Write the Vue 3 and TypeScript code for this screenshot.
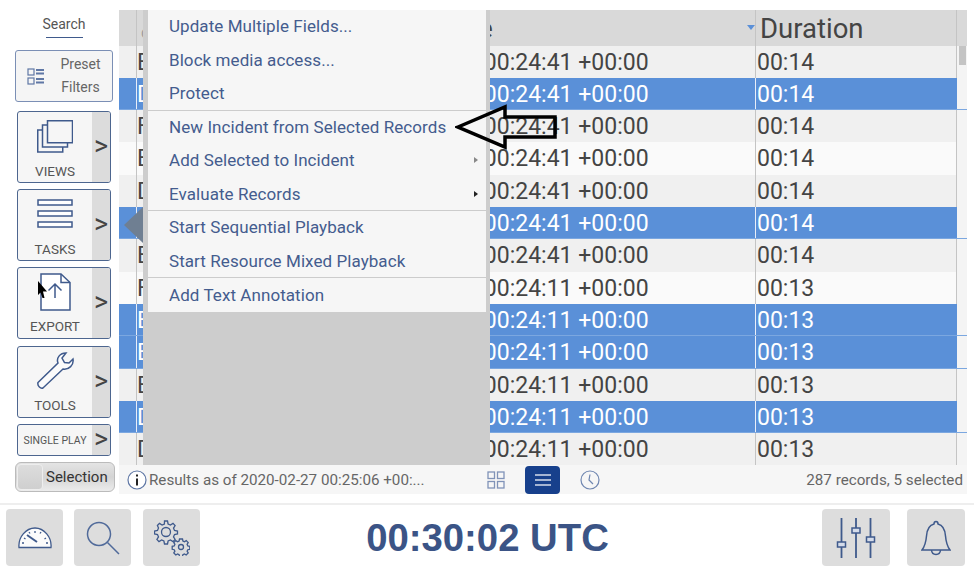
<script setup lang="ts">
interface Row { code: string; time: string; dur: string; sel: boolean }
const seed: [string, string, string, boolean][] = [
  ['E', '00:24:41', '00:14', false], ['D', '00:24:41', '00:14', true], ['F', '00:24:41', '00:14', false],
  ['E', '00:24:41', '00:14', false], ['D', '00:24:41', '00:14', false], ['D', '00:24:41', '00:14', true],
  ['E', '00:24:41', '00:14', false], ['F', '00:24:11', '00:13', false], ['E', '00:24:11', '00:13', true],
  ['E', '00:24:11', '00:13', true], ['E', '00:24:11', '00:13', false], ['D', '00:24:11', '00:13', true],
  ['D', '00:24:11', '00:13', false],
]
const rows: Row[] = seed.map(([code, time, dur, sel]) => ({ code, time: `2020-02-27 ${time} +00:00`, dur, sel }))
const menu = [
  { t: 'Update Multiple Fields...' }, { t: 'Block media access...' }, { t: 'Protect', sep: true },
  { t: 'New Incident from Selected Records' }, { t: 'Add Selected to Incident', sub: 'dim' },
  { t: 'Evaluate Records', sub: 'dark', sep: true }, { t: 'Start Sequential Playback' },
  { t: 'Start Resource Mixed Playback', sep: true }, { t: 'Add Text Annotation' },
]
</script>

<template>
  <div class="page">
    <div class="top">
      <aside class="side">
        <div class="search"><span>Search</span></div>
        <button class="preset">
          <svg width="18" height="17" viewBox="0 0 18 17" fill="none" stroke="#5f77a5" stroke-width="1.2">
            <rect x="1" y="1" width="6" height="6" /><rect x="1" y="10" width="6" height="6" />
            <path d="M9 2h8M9 5.500h8M9 11h8M9 14.500h8" stroke-width="2" />
          </svg>
          <span class="preset-t">Preset<br />Filters</span>
        </button>
        <div class="tool">
          <div class="tool-main">
            <svg class="ic-views" width="36" height="33" viewBox="0 0 36 33" fill="#f6f6f6" stroke="#3f5a8c" stroke-width="1.500">
              <rect x="0.750" y="10" width="25" height="22" /><rect x="5.500" y="5" width="25" height="22" /><rect x="10.500" y="0.750" width="25" height="22" />
            </svg>
            <span>VIEWS</span>
          </div>
          <div class="tool-arr">&gt;</div>
        </div>
        <div class="tool">
          <div class="tool-main">
            <svg class="ic-tasks" width="36" height="29" viewBox="0 0 36 29" fill="#fff" stroke="#3f5a8c" stroke-width="1.500">
              <rect x="1" y="1" width="34" height="5" /><rect x="1" y="12" width="34" height="5" /><rect x="1" y="23" width="34" height="5" />
            </svg>
            <span>TASKS</span>
          </div>
          <div class="tool-arr">&gt;</div>
        </div>
        <div class="tool low">
          <div class="tool-main">
            <svg class="ic-export" width="31" height="38" viewBox="0 0 31 38" fill="#fff" stroke="#3f5a8c" stroke-width="1.500">
              <path d="M1 1H21L30 9.500V37H1Z" /><path d="M21 1V9.500H30" fill="none" />
              <path d="M15 25V11M8.500 17.500L15 11L21.500 17.500" fill="none" />
            </svg>
            <span>EXPORT</span>
          </div>
          <div class="tool-arr">&gt;</div>
        </div>
        <div class="tool tools low">
          <div class="tool-main">
            <svg class="ic-tools" width="37" height="37" viewBox="0 0 37 37" fill="#fbfbfb" stroke="#3f5a8c" stroke-width="1.500">
              <path d="M1 30.500L21 11C19 6 23 1 29 1L25 6L27.500 10.500L32 11L36 7C37 13 32 18 26 17L6 36C4 37 0 34 1 30.500Z" />
            </svg>
            <span>TOOLS</span>
          </div>
          <div class="tool-arr">&gt;</div>
        </div>
        <div class="tool single">
          <div class="tool-main"><span>SINGLE PLAY</span></div>
          <div class="tool-arr">&gt;</div>
        </div>
        <div class="toggle"><i></i><span>Selection</span></div>
      </aside>

      <main class="main">
        <div class="table">
          <div class="head">
            <div class="c1"></div>
            <div class="c2"><span class="code">C</span></div>
            <div class="c3"><span>Time</span><i class="sort"></i></div>
            <div class="c4">Duration</div>
            <div class="c5"></div>
          </div>
          <div class="rows">
            <div v-for="(r, i) in rows" :key="i" class="row" :class="{ sel: r.sel, odd: i % 2 === 1 }">
              <div class="c1"></div>
              <div class="c2">{{ r.code }}</div>
              <div class="c3">{{ r.time }}</div>
              <div class="c4">{{ r.dur }}</div>
              <div class="c5"></div>
            </div>
            <div class="scroll"></div>
          </div>

          <div class="menu">
            <ul>
              <li v-for="m in menu" :key="m.t" :class="{ sep: m.sep }">
                {{ m.t }}
                <i v-if="m.sub" class="caret" :class="m.sub"></i>
              </li>
            </ul>
          </div>
          <svg class="tip" width="20" height="36" viewBox="0 0 20 36"><path d="M0 18L19 0V36Z" fill="#6f7f92" /></svg>
          <svg class="arrow" width="106" height="46" viewBox="0 0 106 46" fill="none" stroke="#000" stroke-width="3.500">
            <path d="M3 23L50 3V13H100V33H50V43Z" />
          </svg>
        </div>
        <footer class="status">
          <svg class="info" width="20" height="20" viewBox="0 0 20 20">
            <circle cx="10" cy="10" r="9" fill="#fff" stroke="#5f77a5" stroke-width="1.200" />
            <path d="M10 4.500v2M10 8.500v7" stroke="#222" stroke-width="2" />
          </svg>
          <span class="res">Results as of 2020-02-27 00:25:06 +00:...</span>
          <svg class="grid-i" width="18" height="18" viewBox="0 0 18 18" fill="none" stroke="#8093b8" stroke-width="1.300">
            <rect x="1" y="1" width="6.500" height="6.500" /><rect x="10.500" y="1" width="6.500" height="6.500" />
            <rect x="1" y="10.500" width="6.500" height="6.500" /><rect x="10.500" y="10.500" width="6.500" height="6.500" />
          </svg>
          <div class="listbtn">
            <svg width="16" height="12" viewBox="0 0 16 12" stroke="#d5dcea" stroke-width="1.600"><path d="M0 1h16M0 6h16M0 11h16" /></svg>
          </div>
          <svg class="clock-i" width="20" height="20" viewBox="0 0 20 20" fill="none" stroke="#6f86b0" stroke-width="1.200">
            <circle cx="10" cy="10" r="9" /><path d="M10 4.500L9 10L13 14" />
          </svg>
          <span class="count">287 records, 5 selected</span>
        </footer>
      </main>
    </div>

    <div class="bottom">
      <button class="bb b1">
        <svg width="34" height="22" viewBox="0 0 34 22" fill="#fbfbfb" stroke="#3f5a8c" stroke-width="1.300">
          <path d="M1 20.500C0 10 8 1 17 1S34 10 33 20.500Z" />
          <path d="M9 8L19 15" stroke-width="2" />
          <path d="M4 16h2M6 11l1.500 1M11 5l1 1.500M17 4v2M23 5l-1 1.500M28 11l-1.500 1M30 16h-2" />
        </svg>
      </button>
      <button class="bb b2">
        <svg width="34" height="34" viewBox="0 0 34 34" fill="none" stroke="#506a9a" stroke-width="1.500">
          <circle cx="13" cy="13" r="11.500" /><path d="M21.500 21.500L33 33" />
        </svg>
      </button>
      <button class="bb b3">
        <svg width="36" height="36" viewBox="0 0 36 36" fill="none" stroke="#3f5a8c" stroke-width="1.300">
          <circle cx="12" cy="12" r="4.500" />
          <path d="M10.500 1h3l.6 3 2.300 1 2.600-1.600 2.100 2.100-1.600 2.600 1 2.300 3 .6v3l-3 .6-1 2.300 1.600 2.600-2.100 2.100-2.600-1.600-2.300 1-.6 3h-3l-.6-3-2.300-1-2.600 1.600-2.100-2.100 1.600-2.600-1-2.300-3-.6v-3l3-.6 1-2.300L3.400 5.500 5.500 3.400l2.600 1.600 2.300-1Z" />
          <circle cx="27" cy="27" r="2.500" />
          <path d="M25.500 19h3l.4 2 1.500.7 1.800-1.100 2 2-1.100 1.800.7 1.500 2 .4v3l-2 .4-.7 1.500 1.100 1.800-2 2-1.800-1.100-1.500.7-.4 2h-3l-.4-2-1.500-.7-1.800 1.100-2-2 1.100-1.800-.7-1.500-2-.4v-3l2-.4.7-1.500-1.100-1.800 2-2 1.800 1.100 1.500-.7Z" />
        </svg>
      </button>
      <div class="clock">00:30:02 UTC</div>
      <button class="bb b4">
        <svg width="40" height="40" viewBox="0 0 40 40" fill="#d5dcea" stroke="#3f5a8c" stroke-width="1.500">
          <path d="M5.500 0V24M5.500 29V40M20 0V10M20 15V40M34.500 0V19M34.500 24V40" stroke-width="1.800" />
          <rect x="1.500" y="24" width="8" height="5" /><rect x="16" y="10" width="8" height="5" /><rect x="30.500" y="19" width="8" height="5" />
        </svg>
      </button>
      <button class="bb b5">
        <svg width="30" height="36" viewBox="0 0 30 36" fill="none" stroke="#3f5a8c" stroke-width="1.500">
          <path d="M1 30C4 26 5 22 5.500 16C6 9 9 5 13 4C13 0.800 17 0.800 17 4C21 5 24 9 24.500 16C25 22 26 26 29 30Z" />
          <path d="M10.500 30C11 36 19 36 19.500 30" />
        </svg>
      </button>
    </div>

    <svg class="cursor" width="10" height="18" viewBox="0 0 10 18"><path d="M0 0L9 10.500H5L6.500 17H4.500L2.500 11.500L0 14Z" fill="#000" /></svg>
  </div>
</template>

<style>
html, body { margin: 0; background: #fff; }
</style>

<style scoped>
.page { width: 974px; height: 568px; position: relative; overflow: hidden; background: #fff; font-family: Roboto, sans-serif; color: #444; display: flex; flex-direction: column; }
.top { height: 503px; display: flex; flex: none; box-sizing: border-box; padding-top: 10px; }

.side { width: 119px; flex: none; display: flex; flex-direction: column; align-items: flex-start; }
.search { width: 100%; height: 40px; margin-top: 4px; display: flex; justify-content: center; font-size: 14px; color: #555; box-sizing: border-box; padding-left: 9px; }
.search span { height: 23px; width: 37px; display: flex; justify-content: center; border-bottom: 1px solid #3f5a8c; line-height: 21px; }
.preset { margin: -4px 0 0 15px; width: 98px; height: 52px; box-sizing: border-box; padding: 0 0 0 11px; background: #f5f5f5; border: 1.500px solid #7b8fb5; border-radius: 3px; display: flex; align-items: center; font: inherit; color: #666; }
.preset-t { font-size: 14px; line-height: 23px; flex: 1; text-align: center; padding-left: 4px; }
.tool { margin: 9px 0 0 17px; width: 94px; height: 72px; box-sizing: border-box; border: 1.500px solid #4d668f; border-radius: 3px; background: #f6f6f6; display: flex; overflow: hidden; }
.tool + .tool { margin-top: 6px; }
.tool + .tool.tools { margin-top: 7px; }
.tool-main { flex: 1; display: flex; flex-direction: column; align-items: center; padding-bottom: 2px; font-size: 13.500px; color: #555; line-height: 17px; }
.tool.low .tool-main { padding-bottom: 3px; }
.tool-main span { margin-top: auto; }
.ic-views { margin-top: 8px; }
.ic-tasks { margin-top: 9px; }
.ic-export { margin-top: 5px; }
.ic-tools { margin-top: 5px; }
.tool-arr { width: 18px; background: #dcdcdc; display: flex; align-items: center; justify-content: center; padding-bottom: 2px; box-sizing: border-box; font-size: 27px; font-weight: 400; color: #444; }
.tool.single { height: 32px; }
.single .tool-main { padding: 0; justify-content: center; font-size: 10.500px; }
.single .tool-main span { margin: 0; }
.toggle { margin: 6px 0 0 15px; width: 100px; height: 30px; box-sizing: border-box; border: 1px solid #bbb; border-radius: 6px; background: linear-gradient(#e4e4e4, #d4d4d4 50%, #ececec); display: flex; align-items: center; gap: 3px; font-size: 15px; color: #333; }
.toggle i { width: 26px; height: 26px; margin-left: 1px; border: 1px solid #eee; border-radius: 4px; background: linear-gradient(#ddd, #cfcfcf); box-sizing: border-box; }

.main { width: 848px; flex: none; display: flex; flex-direction: column; }
.table { position: relative; height: 455px; overflow: hidden; background: #f0f0f0; }
.head { display: flex; height: 35.500px; background: #d9d9d9; font-size: 27.500px; color: #444; line-height: 37px; }
.c1 { width: 17px; flex: none; }
.c2 { width: 220px; flex: none; overflow: hidden; box-sizing: border-box; border-left: 1px solid #c4c4c4; }
.code { font-size: 13px; color: #9a9a9a; padding-left: 4px; }
.c3 { width: 399px; flex: none; overflow: hidden; white-space: nowrap; box-sizing: border-box; position: relative; }
.c4 { width: 201px; flex: none; box-sizing: border-box; border-left: 1px solid #c4c4c4; padding-left: 1px; }
.c5 { flex: 1; border-left: 1px solid #c4c4c4; }
.head .c3 { padding-left: 75px; }
.head .c4 { padding-left: 4px; }
.sort { position: absolute; right: 0; top: 15px; border: 4.500px solid transparent; border-top: 5px solid #5b90d8; border-bottom: 0; }
.rows { position: relative; }
.row { display: flex; height: 32.330px; font-size: 23px; line-height: 33px; background: #f0f0f0; color: #444; box-sizing: border-box; }
.row.odd { background: #fafafa; }
.row.sel { background: #5a90d8; color: #fff; border-bottom: 1px solid #7ba7e0; }
.row.sel .c2, .row.sel .c4 { border-left-color: #e8eef8; }
.row.sel .c5 { border-left-color: #5a90d8; background: #f4f4f4; }
.row .c3 { padding-left: 6px; }
.row .c5 { background: #f4f4f4; }
.scroll { position: absolute; right: 1px; top: 0; width: 7px; height: 19px; background: #c4c4c4; }

.menu { position: absolute; left: 24px; top: 0; bottom: 0; width: 347px; background: #cdcdcd; box-sizing: border-box; padding: 0 4px 0 5px; }
.menu ul { list-style: none; margin: 0; padding: 0; background: #f6f6f6; width: 338px; }
.menu li { position: relative; height: 33.500px; box-sizing: border-box; padding-left: 21px; font-size: 17px; line-height: 32.500px; letter-spacing: 0.070px; color: #445c8e; white-space: nowrap; }
.menu li:last-child { line-height: 35px; }
.menu li.sep { border-bottom: 1px solid #ccc; }
.caret { position: absolute; left: 326px; top: 13px; border: 3.500px solid transparent; border-left: 4px solid #888; border-right: 0; }
.caret.dark { border-left-color: #222; }
.tip { position: absolute; left: 5px; top: 197px; }
.arrow { position: absolute; left: 336px; top: 94px; }

.status { height: 29px; background: #f6f6f6; display: flex; align-items: center; position: relative; font-size: 15.200px; color: #666; }
.info { margin-left: 8px; flex: none; }
.res { margin-left: 2px; width: 338px; flex: none; white-space: nowrap; }
.grid-i { flex: none; margin-right: 20px; }
.listbtn { width: 35px; height: 28px; border-radius: 4px; background: #17408c; display: flex; align-items: center; justify-content: center; flex: none; }
.clock-i { flex: none; margin-left: 20px; }
.count { margin-left: auto; margin-right: 4px; }

.bottom { flex: 1; border-top: 2px solid #eee; box-sizing: border-box; display: flex; align-items: flex-start; padding: 4px 0 0 6px; }
.bb { height: 57px; border: 0; border-radius: 4px; background: #ddd; padding: 0; display: flex; align-items: center; justify-content: center; flex: none; }
.b1 { width: 57px; margin-right: 11px; }
.b2 { width: 57px; margin-right: 12px; }
.b3 { width: 57px; }
.clock { width: 575px; text-align: center; font: bold 38.300px "Liberation Sans", sans-serif; line-height: 58px; color: #3b5486; flex: none; }
.b4 { width: 68px; margin-left: 47px; }
.b5 { width: 58px; margin-left: 17px; }
.cursor { position: absolute; left: 38px; top: 281px; }
</style>
